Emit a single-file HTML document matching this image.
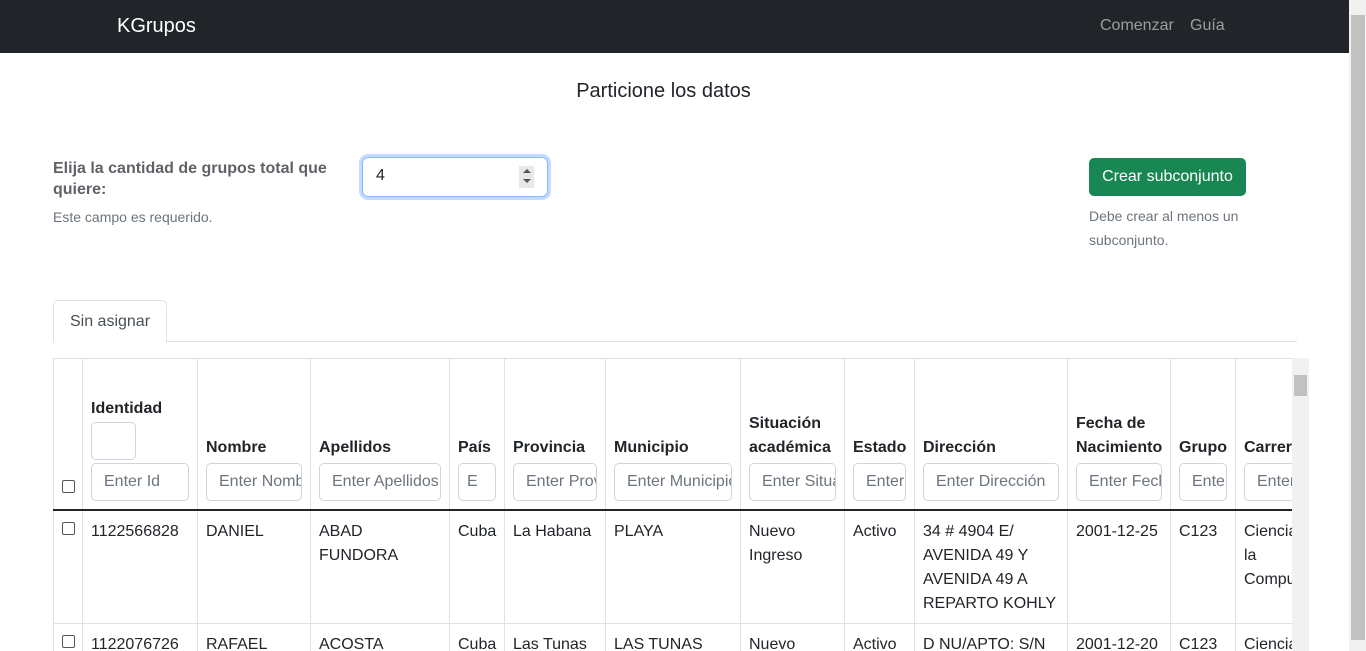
<!DOCTYPE html>
<html><head><meta charset="utf-8">
<style>
*{box-sizing:border-box;margin:0;padding:0}
html,body{width:1366px;height:651px;overflow:hidden;background:#fff;font-family:"Liberation Sans",sans-serif;color:#212529;font-size:16px}
.nav{position:absolute;left:0;top:0;width:1349px;height:53px;background:#212529}
.brand{position:absolute;left:117px;top:15px;color:#fff;font-size:20px}
.nl{position:absolute;top:17px;color:rgba(255,255,255,.55);font-size:16px}
.abs{position:absolute}
.title{left:0;width:1327px;top:80px;text-align:center;font-size:20px;color:#212529}
.lbl{left:53px;top:158px;font-weight:bold;font-size:16px;line-height:21px;width:290px;color:#5f6368}
.help{font-size:14px;color:#6c757d}
.num{left:362px;top:157px;width:186px;height:40px;border:1px solid #86b7fe;border-radius:6px;box-shadow:0 0 0 3px #c2dbfe;font-size:16px;padding:9px 13px}
.spin{position:absolute;right:13px;top:8px;width:15px;height:22px;background:#e8e8e8}
.btn{left:1089px;top:158px;width:157px;height:38px;background:#198754;color:#fff;border-radius:5px;font-size:16px;text-align:center;line-height:38px}
.tab{left:53px;top:300px;width:114px;height:43px;border:1px solid #dee2e6;border-bottom:1px solid #fff;border-radius:5px 5px 0 0;background:#fff;text-align:center;line-height:41px;color:#495057;z-index:2}
.tline{left:53px;top:341px;width:1244px;height:1px;background:#dee2e6}
.wrap{left:53px;top:358px;width:1239px;height:293px;overflow:hidden}
table{border-collapse:collapse;table-layout:fixed;width:1312px}
td,th{border:1px solid #dee2e6;padding:8px;line-height:24px;text-align:left;overflow:hidden;white-space:normal}
th{vertical-align:bottom;height:151px;border-bottom:2px solid #212529;font-weight:bold;padding-bottom:8px}
td{vertical-align:top;padding-top:9px;padding-bottom:7px}
.in{display:block;width:100%;height:38px;border:1px solid #ced4da;border-radius:5px;padding:0 12px;line-height:36px;color:#6c757d;font-weight:normal;white-space:nowrap;overflow:hidden;margin-top:3px}
.cb{display:inline-block;width:13px;height:13px;border:1px solid #555;border-radius:2px;background:#fff}
.sq{display:block;width:45px;height:38px;border:1px solid #ced4da;border-radius:5px;margin:1px 0 0}
.sb{left:1292px;top:358px;width:17px;height:293px;background:#f1f1f1}
.psb{left:1349px;top:0;width:17px;height:651px;background:#f1f1f1}
</style></head><body>
<div class="nav"><div class="brand">KGrupos</div><div class="nl" style="left:1100px">Comenzar</div><div class="nl" style="left:1190px">Guía</div></div>
<div class="abs psb"><div style="position:absolute;left:2px;top:15px;width:14px;height:625px;background:#c1c1c1"></div></div>
<div class="abs title">Particione los datos</div>
<div class="abs lbl">Elija la cantidad de grupos total que quiere:</div>
<div class="abs help" style="left:53px;top:209px">Este campo es requerido.</div>
<div class="abs num">4<div class="spin"><div style="position:absolute;left:4px;top:3px;border:4px solid transparent;border-bottom:4px solid #555;border-top:0"></div><div style="position:absolute;left:4px;top:13px;border:4px solid transparent;border-top:4px solid #555;border-bottom:0"></div></div></div>
<div class="abs btn">Crear subconjunto</div>
<div class="abs help" style="left:1089px;top:204px;line-height:24px;width:170px">Debe crear al menos un subconjunto.</div>
<div class="abs tline"></div>
<div class="abs tab">Sin asignar</div>
<div class="abs wrap">
<table>
<colgroup><col style="width:29px"><col style="width:115px"><col style="width:113px"><col style="width:139px"><col style="width:55px"><col style="width:101px"><col style="width:135px"><col style="width:104px"><col style="width:70px"><col style="width:153px"><col style="width:103px"><col style="width:65px"><col style="width:130px"></colgroup>
<tr>
<th style="padding-bottom:14px;line-height:13px"><span class="cb"></span></th>
<th>Identidad<span class="sq"></span><span class="in">Enter Id</span></th>
<th>Nombre<span class="in">Enter Nombre</span></th>
<th>Apellidos<span class="in">Enter Apellidos</span></th>
<th>País<span class="in" style="padding:0 8px">E</span></th>
<th>Provincia<span class="in">Enter Provincia</span></th>
<th>Municipio<span class="in">Enter Municipio</span></th>
<th>Situación académica<span class="in">Enter Situación</span></th>
<th>Estado<span class="in">Enter</span></th>
<th>Dirección<span class="in">Enter Dirección</span></th>
<th>Fecha de Nacimiento<span class="in">Enter Fecha</span></th>
<th>Grupo<span class="in">Enter</span></th>
<th>Carrera<span class="in">Enter Carrera</span></th>
</tr>
<tr style="height:113px">
<td style="padding-top:11px;line-height:13px"><span class="cb"></span></td>
<td>1122566828</td><td>DANIEL</td><td>ABAD FUNDORA</td><td>Cuba</td><td>La Habana</td><td>PLAYA</td><td>Nuevo Ingreso</td><td>Activo</td><td>34 # 4904 E/ AVENIDA 49 Y AVENIDA 49 A REPARTO KOHLY</td><td>2001-12-25</td><td>C123</td><td style="white-space:nowrap">Ciencias de<br>la<br>Computación</td>
</tr>
<tr>
<td style="padding-top:11px;line-height:13px"><span class="cb"></span></td>
<td>1122076726</td><td>RAFAEL</td><td>ACOSTA</td><td>Cuba</td><td>Las Tunas</td><td>LAS TUNAS</td><td>Nuevo</td><td>Activo</td><td>D NU/APTO: S/N</td><td>2001-12-20</td><td>C123</td><td style="white-space:nowrap">Ciencias de</td>
</tr>
</table>
</div>
<div class="abs sb"><div style="position:absolute;left:2px;top:17px;width:13px;height:21px;background:#c1c1c1"></div></div>
</body></html>
